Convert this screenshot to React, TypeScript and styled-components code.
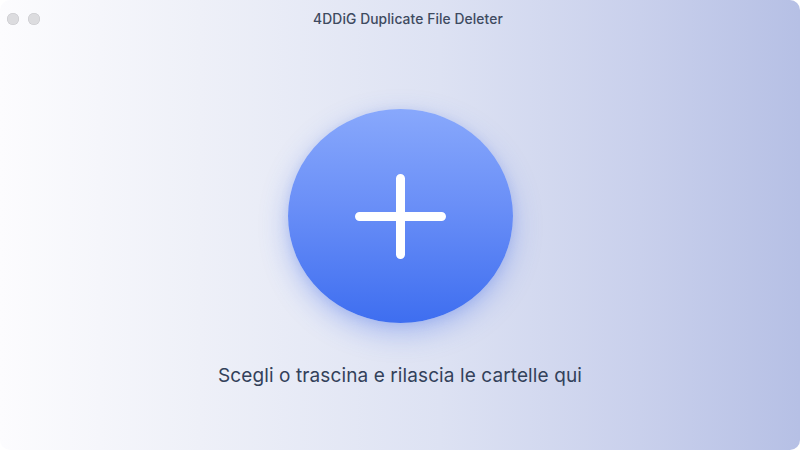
import styled, { createGlobalStyle } from 'styled-components';

const GlobalStyle = createGlobalStyle`
  html, body {
    margin: 0;
    padding: 0;
    background: #ffffff;
  }
  body {
    font-family: Inter, "Noto Sans", "Liberation Sans", sans-serif;
  }
`;

const Window = styled.div`
  width: 800px;
  height: 450px;
  box-sizing: border-box;
  border-radius: 10px;
  overflow: hidden;
  display: flex;
  flex-direction: column;
  background: linear-gradient(90deg, #fcfcfe 0%, #eef0f8 25%, #dde2f3 55%, #c9d0ec 80%, #b6c0e5 100%);
`;

const TitleBar = styled.div`
  height: 38px;
  display: grid;
  grid-template-columns: 1fr auto 1fr;
  align-items: center;
  padding: 0 7px;
`;

const Lights = styled.div`
  display: flex;
  gap: 9px;
`;

const Light = styled.span`
  width: 12px;
  height: 12px;
  border-radius: 50%;
  background: #dcdcdf;
  box-shadow: inset 0 0 0 0.5px #c6c6ca;
`;

const Title = styled.div`
  font-size: 13.8px;
  color: #3e4a5f;
  font-weight: 500;
  letter-spacing: 0.1px;
  padding-left: 16px;
`;

const Main = styled.main`
  flex: 1;
  display: flex;
  flex-direction: column;
  align-items: center;
  padding-top: 71px;
`;

const AddButton = styled.button`
  width: 225px;
  height: 214px;
  border-radius: 50%;
  border: none;
  padding: 0;
  display: flex;
  align-items: center;
  justify-content: center;
  cursor: pointer;
  background: linear-gradient(180deg, #88a8fc 0%, #6a8ff7 45%, #3e6ef0 100%);
  box-shadow: 0 10px 28px rgba(62, 105, 235, 0.35), 0 2px 10px rgba(90, 120, 230, 0.15);
`;

const Hint = styled.p`
  margin: 41px 0 0;
  font-size: 19px;
  line-height: 24px;
  color: #33415a;
  letter-spacing: 0.1px;
`;

export default function App() {
  return (
    <>
      <GlobalStyle />
      <Window>
        <TitleBar>
          <Lights>
            <Light />
            <Light />
          </Lights>
          <Title>4DDiG Duplicate File Deleter</Title>
          <span />
        </TitleBar>
        <Main>
          <AddButton aria-label="Aggiungi">
            <svg width="91" height="85" viewBox="0 0 91 85" fill="none">
              <path d="M45.5 4.5 V80.5 M4.5 42.5 H86.5" stroke="#ffffff" strokeWidth="9" strokeLinecap="round" />
            </svg>
          </AddButton>
          <Hint>Scegli o trascina e rilascia le cartelle qui</Hint>
        </Main>
      </Window>
    </>
  );
}
